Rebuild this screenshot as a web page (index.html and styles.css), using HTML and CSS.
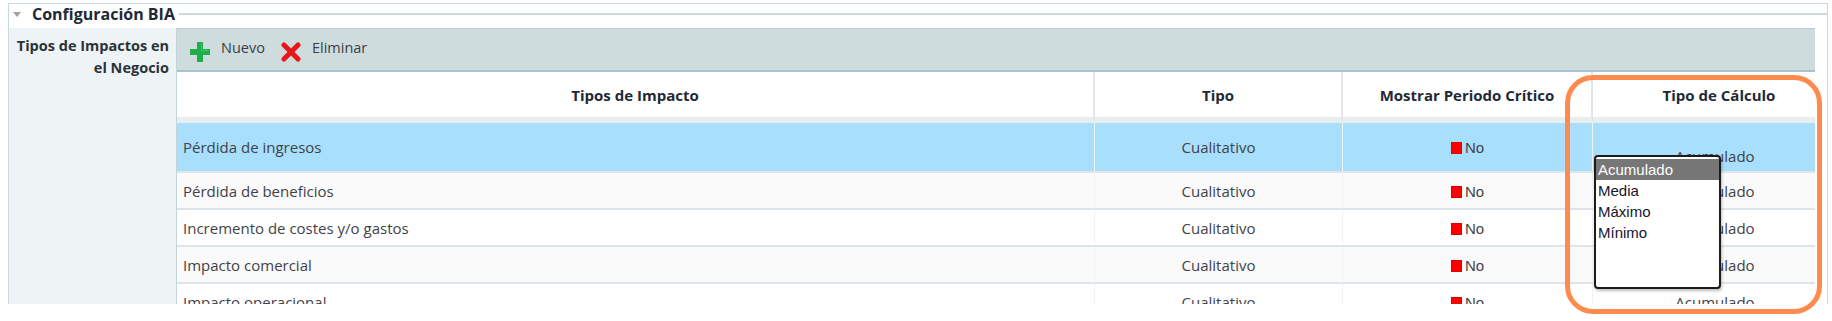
FILE: index.html
```html
<!DOCTYPE html>
<html lang="es">
<head>
    <meta charset="UTF-8">
    <meta name="viewport" content="width=device-width, initial-scale=1.0">
    <title>Configuración BIA</title>
    <link rel="stylesheet" href="styles.css">
</head>
<body>
    <div class="screen">
        <div class="page">
            <div class="section-head">
                <span class="caret"></span>
                <h2 class="section-title">Configuración BIA</h2>
                <span class="section-rule"></span>
            </div>

            <div class="field">
                <div class="field-label">Tipos de Impactos en<br>el Negocio</div>

                <div class="grid-area">
                    <div class="toolbar">
                        <button class="tool" type="button">
                            <svg width="20" height="20" viewBox="0 0 20 20">
                                <path d="M7 0h6v7h7v6h-7v7h-6v-7h-7v-6h7z" fill="#1fae4c"/>
                                <path d="M8 1h4v7h7v1h-8v-8z" fill="#4fd27a" opacity="0.6"/>
                            </svg>
                            <span>Nuevo</span>
                        </button>
                        <button class="tool" type="button">
                            <svg width="20" height="20" viewBox="0 0 20 20">
                                <path d="M3 3L17 17M17 3L3 17" stroke="#e8151c" stroke-width="5" stroke-linecap="round"/>
                            </svg>
                            <span>Eliminar</span>
                        </button>
                    </div>

                    <table class="grid">
                        <colgroup>
                            <col class="col-name">
                            <col class="col-type">
                            <col class="col-crit">
                            <col class="col-calc">
                        </colgroup>
                        <thead>
                            <tr>
                                <th>Tipos de Impacto</th>
                                <th>Tipo</th>
                                <th>Mostrar Periodo Crítico</th>
                                <th class="th-calc">Tipo de Cálculo</th>
                            </tr>
                        </thead>
                        <tbody>
                            <tr class="row-selected">
                                <td class="cell-name">Pérdida de ingresos</td>
                                <td>Cualitativo</td>
                                <td><span class="flag"></span><span class="flag-text">No</span></td>
                                <td class="cell-calc cell-open">Acumulado</td>
                            </tr>
                            <tr class="row-alt">
                                <td class="cell-name">Pérdida de beneficios</td>
                                <td>Cualitativo</td>
                                <td><span class="flag"></span><span class="flag-text">No</span></td>
                                <td class="cell-calc">Acumulado</td>
                            </tr>
                            <tr>
                                <td class="cell-name">Incremento de costes y/o gastos</td>
                                <td>Cualitativo</td>
                                <td><span class="flag"></span><span class="flag-text">No</span></td>
                                <td class="cell-calc">Acumulado</td>
                            </tr>
                            <tr class="row-alt">
                                <td class="cell-name">Impacto comercial</td>
                                <td>Cualitativo</td>
                                <td><span class="flag"></span><span class="flag-text">No</span></td>
                                <td class="cell-calc">Acumulado</td>
                            </tr>
                            <tr>
                                <td class="cell-name">Impacto operacional</td>
                                <td>Cualitativo</td>
                                <td><span class="flag"></span><span class="flag-text">No</span></td>
                                <td class="cell-calc">Acumulado</td>
                            </tr>
                        </tbody>
                    </table>

                    <!-- lista desplegable abierta sobre "Tipo de Cálculo" -->
                    <ul class="listbox">
                        <li class="option option-active">Acumulado</li>
                        <li class="option">Media</li>
                        <li class="option">Máximo</li>
                        <li class="option">Mínimo</li>
                    </ul>
                </div>
            </div>
        </div>

        <div class="highlight"></div>
    </div>
</body>
</html>
```

FILE: styles.css
```css
body {
    margin: 0;
    font-family: "Open Sans", "Liberation Sans", sans-serif;
    color: #3f4348;
    background-color: #fff;
}
.screen {
    position: relative;
    height: 321px;
}
.page {
    margin: 3px 4px 0 8px;
    height: 301px;
    box-sizing: border-box;
    border: 1px solid #c9d8e1;
    border-bottom: 0;
    overflow: hidden;
}

/* cabecera de la sección */
.section-head {
    display: flex;
    align-items: center;
    height: 20px;
}
.caret {
    width: 0;
    height: 0;
    margin-left: 4px;
    border-left: 4.5px solid transparent;
    border-right: 4.5px solid transparent;
    border-top: 5px solid #9ca3a8;
}
.section-title {
    margin: 0 0 0 11px;
    font-size: 16px;
    font-weight: 700;
    line-height: 20px;
    color: #1d2935;
}
.section-rule {
    flex: 1;
    margin-left: 4px;
    border-top: 2px solid #c9d9e3;
}

/* campo: etiqueta + rejilla */
.field {
    display: flex;
    margin-top: 4px;
    height: 276px;
}
.field-label {
    width: 167px;
    box-sizing: border-box;
    padding: 7px 7px 0 0;
    background-color: #eef3f5;
    text-align: right;
    font-size: 14.5px;
    font-weight: 700;
    line-height: 22px;
    color: #2b3238;
}
.grid-area {
    position: relative;
    flex: 1;
    padding-right: 12px;
    border-left: 1px solid #c4d3da;
}

.toolbar {
    display: flex;
    align-items: flex-start;
    gap: 16px;
    height: 44px;
    box-sizing: border-box;
    padding: 9px 0 0 13px;
    background-color: #cfdcdd;
    border-top: 1px solid #bccbd2;
    border-bottom: 2px solid #a9c2cf;
}
.tool {
    display: flex;
    align-items: flex-start;
    gap: 11px;
    padding: 0;
    border: 0;
    background: none;
    font-family: inherit;
    font-size: 14.5px;
    line-height: 20px;
    color: #3a3f46;
}
.tool svg {
    margin-top: 4px;
}

/* tabla */
.grid {
    width: 100%;
    table-layout: fixed;
    border-collapse: separate;
    border-spacing: 0;
}
.col-name { width: 918px; }
.col-type { width: 248px; }
.col-crit { width: 250px; }
.col-calc { width: 222px; }

.grid th {
    height: 45px;
    padding: 0 6px;
    background-color: #fff;
    border-bottom: 6px solid #e8eef0;
    border-right: 2px solid #e0e6e9;
    font-size: 15px;
    font-weight: 700;
    color: #1f2a35;
    text-align: center;
}
.grid th:last-child {
    border-right: 0;
}
.grid .th-calc {
    padding-left: 36px;
}
.grid td {
    height: 35px;
    padding: 0 6px;
    border-bottom: 2px solid #dde5e8;
    border-right: 1px solid #f0f2f3;
    font-size: 15px;
    text-align: center;
    white-space: nowrap;
}
.grid td:last-child {
    border-right: 0;
}
.grid .cell-name {
    text-align: left;
}
.grid .cell-calc {
    padding-left: 28px;
}
.row-selected td {
    height: 48px;
    background-color: #a8dffc;
}
.row-alt td {
    background-color: #fafafa;
}
.row-selected .cell-open {
    height: 30px;
    padding-top: 18px;
}

.flag {
    display: inline-block;
    width: 11px;
    height: 12px;
    margin-right: 3px;
    box-sizing: border-box;
    background-color: #ff0000;
    border: 1px solid #e00000;
    vertical-align: -1px;
}
.flag-text {
    font-family: "Liberation Sans", Arial, sans-serif;
    font-size: 15px;
}

/* lista desplegable */
.listbox {
    position: absolute;
    left: 1417px;
    top: 127px;
    width: 127px;
    height: 134px;
    box-sizing: border-box;
    margin: 0;
    padding: 2px 0 0;
    list-style: none;
    background-color: #fff;
    border: 2px solid #1c1c1c;
    border-radius: 4px;
    box-shadow: 1px 2px 3px rgba(0, 0, 0, 0.25);
    font-family: "Liberation Sans", Arial, sans-serif;
    font-size: 15px;
    line-height: 21px;
    color: #15152e;
}
.option {
    padding-left: 2px;
}
.option-active {
    background-color: #777;
    color: #fff;
}

/* marco de resaltado */
.highlight {
    position: absolute;
    left: 1565px;
    top: 72px;
    width: 257px;
    height: 239px;
    box-sizing: border-box;
    border: 5px solid #ff8a4d;
    border-radius: 28px;
    pointer-events: none;
}
```
